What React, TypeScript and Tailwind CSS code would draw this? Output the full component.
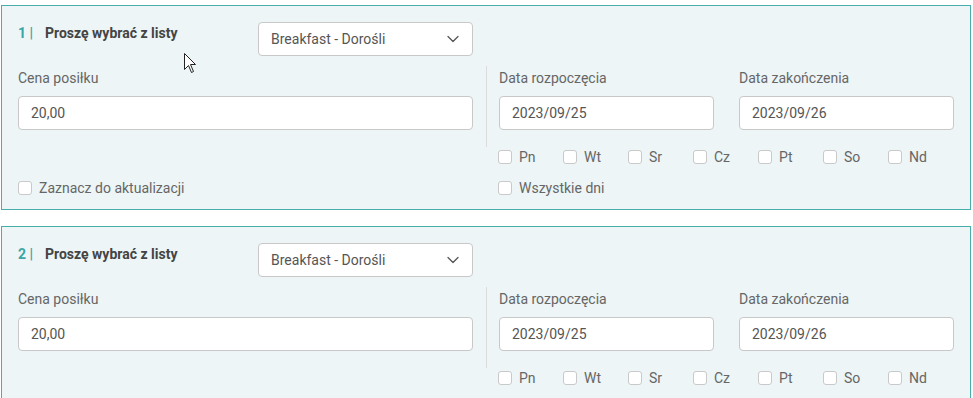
import React from "react";
import { ChevronDown } from "lucide-react";

const days = ["Pn", "Wt", "Sr", "Cz", "Pt", "So", "Nd"];

function Box() {
  return <span className="inline-block w-[14px] h-[14px] rounded-[3px] border border-[#c9c9c9] bg-white shrink-0" />;
}

function Check({ label }: { label: string }) {
  return (
    <label className="flex items-center gap-[7px] h-5 text-[14px] text-[#666]">
      <Box />
      <span>{label}</span>
    </label>
  );
}

function Field({ label, value }: { label: string; value: string }) {
  return (
    <div className="flex flex-col">
      <div className="mt-[2px] leading-5 text-[14px] text-[#666]">{label}</div>
      <div className="mt-2 h-[34px] rounded-[4px] border border-[#c8c8c8] bg-white flex items-center pl-3 text-[14px] text-[#555]">
        {value}
      </div>
    </div>
  );
}

function Card({ n }: { n: number }) {
  return (
    <div className="border border-[#48aeaa] bg-[#edf5f6] pt-4 pb-[11px] px-4">
      <div className="flex">
        <div className="w-[455px] grid grid-cols-[215px_215px] gap-x-[25px]">
          <div className="mt-[1px] leading-5 text-[14px] font-bold flex">
            <span className="text-[#3aa6a6] w-[27px]">{n} |</span>
            <span className="text-[#444]">Proszę wybrać z listy</span>
          </div>
          <div className="h-[34px] rounded-[4px] border border-[#c8c8c8] bg-white flex items-center justify-between pl-[12px] pr-[9px] text-[14px] text-[#555]">
            <span>Breakfast - Dorośli</span>
            <ChevronDown size={20} strokeWidth={1.5} className="text-[#555]" />
          </div>
        </div>
      </div>
      <div className="flex mt-[10px]">
        <div className="w-[455px] pb-[17px]">
          <Field label="Cena posiłku" value="20,00" />
        </div>
        <div className="w-[26px] flex justify-center">
          <div className="w-px bg-[#dcdcdc]" />
        </div>
        <div className="w-[455px] grid grid-cols-[215px_215px] gap-x-[25px] pb-[17px]">
          <Field label="Data rozpoczęcia" value="2023/09/25" />
          <Field label="Data zakończenia" value="2023/09/26" />
        </div>
      </div>
      <div className="flex">
        <div className="w-[455px]" />
        <div className="w-[26px]" />
        <div className="w-[455px] grid grid-cols-7 -ml-px">
          {days.map((d) => (
            <Check key={d} label={d} />
          ))}
        </div>
      </div>
      <div className="flex mt-[11px]">
        <div className="w-[455px]">
          <Check label="Zaznacz do aktualizacji" />
        </div>
        <div className="w-[26px]" />
        <div className="w-[455px] -ml-px">
          <Check label="Wszystkie dni" />
        </div>
      </div>
    </div>
  );
}

export default function App() {
  return (
    <div
      className="relative bg-white pt-[5px] pl-px pr-[2px] flex flex-col gap-4"
      style={{ fontFamily: "Roboto, 'Liberation Sans', sans-serif" }}
    >
      <Card n={1} />
      <Card n={2} />
      <svg
        className="absolute left-[184px] top-[53px]"
        width="13"
        height="21"
        viewBox="0 0 13 21"
      >
        <path
          d="M0.5 0.5 L0.5 16.5 L4.5 12.5 L7.5 19.5 L9.5 18.5 L6.5 11.5 L11.5 11.5 Z"
          fill="white"
          stroke="#222"
          strokeWidth="1"
          strokeLinejoin="miter"
        />
      </svg>
    </div>
  );
}
